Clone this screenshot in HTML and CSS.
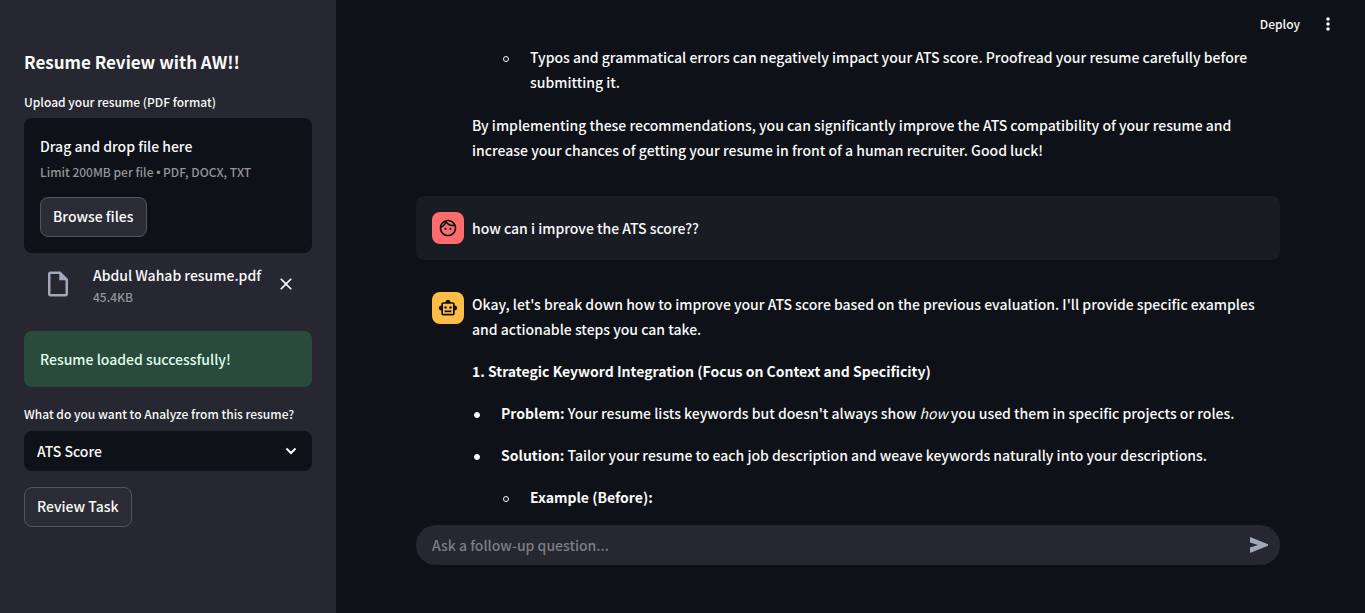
FILE: index.html
```html
<!DOCTYPE html>
<html lang="en">
<head>
<meta charset="utf-8">
<title>Resume Review with AW!!</title>
<link rel="stylesheet" href="styles.css">
</head>
<body>
<div class="app">
  <aside class="sidebar">
    <h1 class="title">Resume Review with AW!!</h1>
    <label class="label" for="browse">Upload your resume (PDF format)</label>
    <section class="dropzone">
      <span class="drop-title">Drag and drop file here</span>
      <span class="hint">Limit 200MB per file <span class="dot">•</span> PDF, DOCX, TXT</span>
      <button class="button" id="browse" type="button">Browse files</button>
    </section>
    <div class="file">
      <svg class="file-icon" viewBox="0 0 24 24" width="30" height="30"><path fill="currentColor" d="M14 2H6c-1.100 0-2 .9-2 2v16c0 1.100.9 2 2 2h12c1.100 0 2-.9 2-2V8l-6-6zM6 20V4h7v5h5v11H6z"/></svg>
      <div class="file-info">
        <span class="file-name">Abdul Wahab resume.pdf</span>
        <span class="file-size">45.4KB</span>
      </div>
      <button class="icon-button" type="button" aria-label="Remove file">
        <svg viewBox="0 0 24 24" width="20" height="20"><path fill="currentColor" d="M19 6.410 17.590 5 12 10.590 6.410 5 5 6.410 10.590 12 5 17.590 6.410 19 12 13.410 17.590 19 19 17.590 13.410 12z"/></svg>
      </button>
    </div>
    <div class="alert" role="status">Resume loaded successfully!</div>
    <label class="label" for="task">What do you want to Analyze from this resume?</label>
    <div class="select-box">
      <select class="select" id="task"><option>ATS Score</option></select>
      <svg class="chevron" viewBox="0 0 12 12" width="12" height="12"><path fill="none" stroke="currentColor" stroke-width="2" d="M1.500 3.500 6 8l4.500-4.500"/></svg>
    </div>
    <button class="button" type="button">Review Task</button>
  </aside>
  <main class="main">
    <header class="toolbar">
      <button class="deploy" type="button">Deploy</button>
      <button class="icon-button" type="button" aria-label="Main menu">
        <svg viewBox="0 0 24 24" width="20" height="20"><g fill="currentColor"><circle cx="12" cy="6" r="2.100"/><circle cx="12" cy="12" r="2.100"/><circle cx="12" cy="18" r="2.100"/></g></svg>
      </button>
    </header>
    <div class="chat">
      <article class="message message-continued">
        <div class="text">
          <ul class="list nested"><li><div>Typos and grammatical errors can negatively impact your ATS score. Proofread your resume carefully before submitting it.</div></li></ul>
          <p>By implementing these recommendations, you can significantly improve the ATS compatibility of your resume and increase your chances of getting your resume in front of a human recruiter. Good luck!</p>
        </div>
      </article>
      <article class="message message-user">
        <div class="avatar avatar-user">
          <svg viewBox="0 0 24 24" width="20" height="20"><path fill="currentColor" d="M10.250 13c0 .69-.56 1.250-1.250 1.250S7.750 13.690 7.750 13s.56-1.250 1.250-1.250 1.250.56 1.250 1.250zM15 11.750c-.69 0-1.250.56-1.250 1.250s.56 1.250 1.250 1.250 1.250-.56 1.250-1.250-.56-1.250-1.250-1.250zm7 .25c0 5.520-4.480 10-10 10S2 17.520 2 12 6.480 2 12 2s10 4.480 10 10zM10.660 4.120C12.060 6.440 14.600 8 17.500 8c.46 0 .91-.05 1.340-.12C17.440 5.560 14.900 4 12 4c-.46 0-.91.050-1.340.120zM4.420 9.470c1.710-.97 3.030-2.550 3.660-4.440C6.370 6 5.050 7.580 4.420 9.470zM20 12c0-.78-.12-1.530-.33-2.240-.7.150-1.420.240-2.170.240-3.130 0-5.920-1.440-7.760-3.690C8.690 8.870 6.600 10.880 4 11.860c.01.040 0 .090 0 .140 0 4.410 3.590 8 8 8s8-3.590 8-8z"/></svg>
        </div>
        <div class="text"><p>how can i improve the ATS score??</p></div>
      </article>
      <article class="message">
        <div class="avatar avatar-bot">
          <svg viewBox="0 0 24 24" width="20" height="20"><path fill="currentColor" fill-rule="evenodd" d="M20 9V7c0-1.100-.9-2-2-2h-3c0-1.660-1.340-3-3-3S9 3.340 9 5H6c-1.100 0-2 .9-2 2v2c-1.660 0-3 1.340-3 3s1.340 3 3 3v4c0 1.100.9 2 2 2h12c1.100 0 2-.9 2-2v-4c1.660 0 3-1.340 3-3s-1.340-3-3-3zm-2 10H6V7h12v12z"/><circle cx="9" cy="11.500" r="1.500" fill="currentColor"/><circle cx="15" cy="11.500" r="1.500" fill="currentColor"/><path fill="currentColor" d="M8 15h8v2H8z"/></svg>
        </div>
        <div class="text">
          <p>Okay, let's break down how to improve your ATS score based on the previous evaluation. I'll provide specific examples and actionable steps you can take.</p>
          <p><strong>1. Strategic Keyword Integration (Focus on Context and Specificity)</strong></p>
          <ul class="list">
            <li><div><strong>Problem:</strong> Your resume lists keywords but doesn't always show <em>how</em> you used them in specific projects or roles.</div></li>
            <li><div><strong>Solution:</strong> Tailor your resume to each job description and weave keywords naturally into your descriptions.
              <ul class="list"><li><div><strong>Example (Before):</strong></div></li></ul>
            </div></li>
          </ul>
        </div>
      </article>
    </div>
    <form class="ask">
      <input class="ask-input" type="text" aria-label="Ask a follow-up question" placeholder="Ask a follow-up question...">
      <button class="icon-button send" type="button" aria-label="Send">
        <svg viewBox="0 0 20 18" width="20" height="18"><path fill="currentColor" d="M1 1v5.500L9 9l-8 2.500V17l18-7.200V8.200z"/></svg>
      </button>
    </form>
  </main>
</div>
</body>
</html>
```
FILE: styles.css
```css
*, *::before { box-sizing: border-box; }

body {
  margin: 0;
  background: #0e1117;
  color: #fafafa;
  font-family: "Noto Sans CJK SC", "Noto Sans", sans-serif;
  font-size: 14px;
  font-weight: 500;
  line-height: 25px;
}

button, input, select { font: inherit; color: inherit; }
button { cursor: pointer; }
p, ul { margin: 0; padding: 0; }
svg { display: block; }
em { font-weight: 400; }

.app { display: flex; height: 100vh; }

.sidebar {
  flex: 0 0 336px;
  display: flex;
  flex-direction: column;
  align-items: stretch;
  padding: 48px 24px;
  background: #262730;
}

.title { margin: 0 0 17px; font-size: 17px; line-height: 27px; font-weight: 700; }
.label { margin-bottom: 6px; font-size: 12px; line-height: 20px; }

.dropzone {
  display: flex;
  flex-direction: column;
  align-items: flex-start;
  padding: 16px;
  border-radius: 8px;
  background: #0e1117;
}
.drop-title { line-height: 25px; }
.hint { margin-bottom: 13px; font-size: 12px; line-height: 25px; color: #94959a; }
.dot { font-family: "Liberation Sans", sans-serif; line-height: 12px; }

.button {
  align-self: flex-start;
  height: 40px;
  padding: 0 12px 2px;
  border: 1px solid #53545c;
  border-radius: 8px;
  background: #2b2c36;
}

.file { display: flex; align-items: center; padding: 8px 16px 0 19px; margin-bottom: 24px; }
.file-icon { color: #a3a8b8; }
.file-info { flex: 1; display: flex; flex-direction: column; margin-left: 20px; padding-bottom: 2px; }
.file-name { line-height: 28px; }
.file-size { font-size: 12px; line-height: 16px; color: #94959a; }
.icon-button { padding: 0; border: 0; background: none; }

.alert {
  margin-bottom: 17px;
  padding: 16px;
  line-height: 24px;
  border-radius: 8px;
  background: #2a4a3c;
  color: #dffde9;
}
.alert + .label { margin-bottom: 7px; }

.select-box { position: relative; margin-bottom: 16px; }
.select {
  display: block;
  width: 100%;
  height: 40px;
  padding: 0 36px 0 13px;
  border: 0;
  border-radius: 8px;
  appearance: none;
  background: #0e1117;
}
.chevron { position: absolute; right: 15px; top: 14px; pointer-events: none; }

.main {
  flex: 1;
  min-width: 0;
  display: flex;
  flex-direction: column;
  padding: 0 85px 48px 80px;
}

.toolbar {
  display: flex;
  flex: 0 0 45px;
  justify-content: flex-end;
  align-items: center;
  gap: 18px;
  margin-right: -58px;
  padding-top: 2px;
}
.deploy { padding: 0; border: 0; background: none; font-size: 12px; }

.chat {
  flex: 1;
  min-height: 0;
  overflow: hidden;
  display: flex;
  flex-direction: column;
  gap: 16px;
}

.message { display: flex; gap: 8px; padding: 16px; border-radius: 8px; }
.message-continued { padding: 0 16px 17px 56px; }
.message-continued .list { margin-bottom: 1px; }
.message-user { background: #1a1c24; }
.message-user .text { align-self: center; }

.text { flex: 1; min-width: 0; display: flex; flex-direction: column; gap: 17px; padding-right: 8px; }

.list { display: flex; flex-direction: column; gap: 17px; list-style: none; }
.list li { display: grid; grid-template-columns: 29px 1fr; }
.list li::before {
  content: "";
  width: 6px;
  height: 6px;
  margin: 11px 0 0 2px;
  border: 1px solid currentColor;
  border-radius: 50%;
  background: currentColor;
}
.list .list { margin-top: 17px; }
.list .list li::before, .nested li::before { background: none; }
.nested { padding-left: 29px; }

.avatar {
  flex: none;
  display: grid;
  place-items: center;
  width: 32px;
  height: 32px;
  border-radius: 8px;
  color: #0e1117;
}
.avatar-user { background: #ff6c6c; }
.avatar-bot { background: #ffbd45; }

.ask {
  flex: none;
  display: flex;
  align-items: center;
  height: 40px;
  padding: 0 11px 0 16px;
  border-radius: 20px;
  background: #262730;
}
.ask-input { flex: 1; min-width: 0; padding: 0; border: 0; outline: 0; background: none; }
.ask-input::placeholder { color: #7d7d83; opacity: 1; }
.send { color: #a3a8b8; }
```
